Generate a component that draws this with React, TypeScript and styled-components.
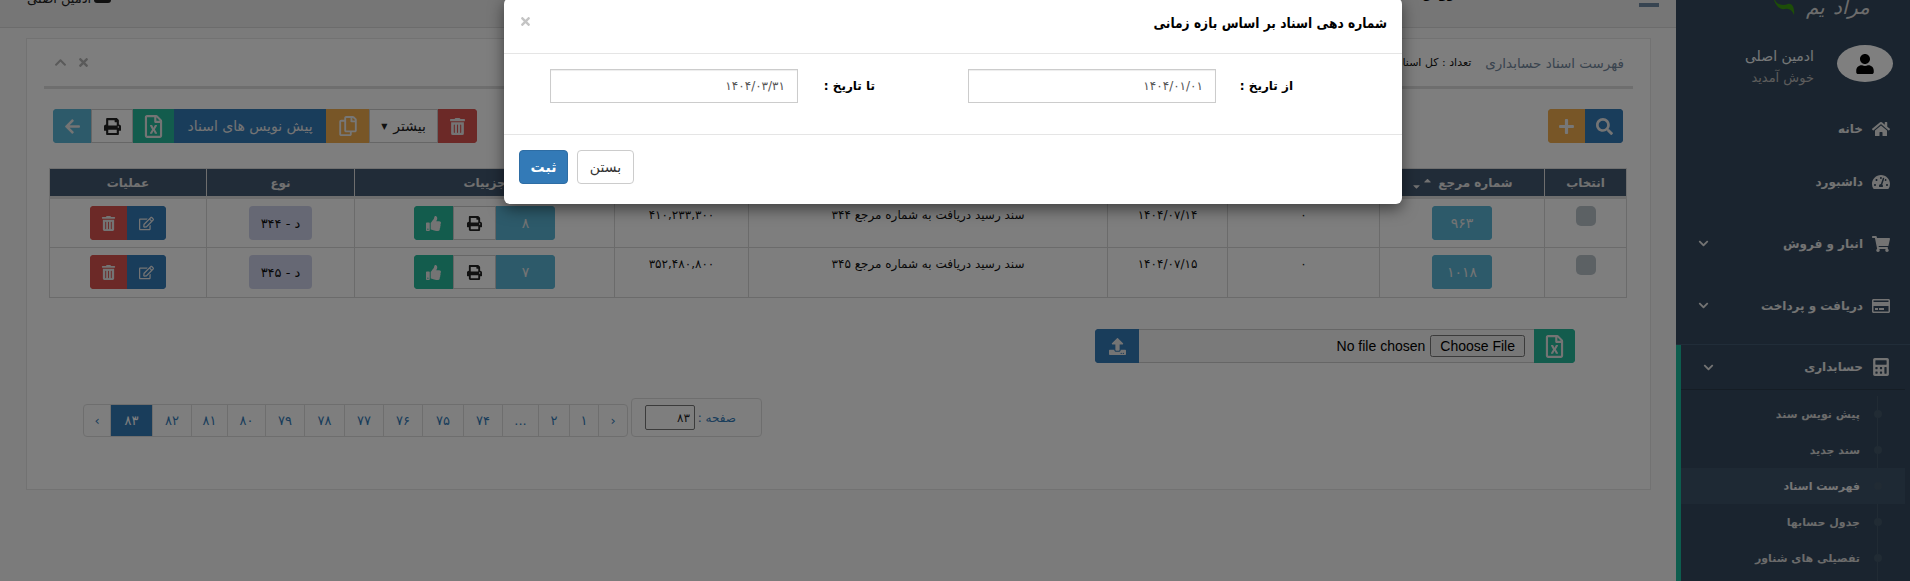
import { createGlobalStyle, styled } from "styled-components"
import {
  FaArrowLeft,
  FaCalculator,
  FaCaretDown,
  FaCaretUp,
  FaChevronDown,
  FaChevronUp,
  FaHome,
  FaPlus,
  FaPrint,
  FaRegCopy,
  FaRegCreditCard,
  FaRegEdit,
  FaRegFileExcel,
  FaSearch,
  FaShoppingCart,
  FaTachometerAlt,
  FaThumbsUp,
  FaTimes,
  FaTrashAlt,
  FaUpload,
  FaUser,
} from "react-icons/fa"

const FONT = `Tahoma, "DejaVu Sans", "Noto Sans", sans-serif`

const GlobalStyle = createGlobalStyle`
  html, body {
    margin: 0;
    height: 581px;
    overflow: hidden;
    background: #f6f6f6;
    font-family: ${FONT};
    font-size: 12px;
  }
  * { box-sizing: border-box; }
`

const Shell = styled.div`
  position: relative;
  display: flex;
  width: 1910px;
  height: 581px;
  overflow: hidden;
`

const Main = styled.main`
  flex: 0 0 1675px;
  display: flex;
  flex-direction: column;
`

const TopBar = styled.header`
  flex: 0 0 28px;
  display: flex;
  align-items: flex-end;
  justify-content: space-between;
  overflow: hidden;
  padding: 0 17px 21px 27px;
  background: #ececec;
  border-bottom: 1px solid #d8d8d8;
`

const TopUser = styled.div`
  display: flex;
  align-items: center;
  gap: 30px;
  font-size: 13px;
  color: #222;
`

const TopAvatar = styled.span`
  display: inline-block;
  width: 17px;
  height: 10px;
  margin-left: 3px;
  border-radius: 3px;
  background: #222;
`

const TopLine = styled.span`
  display: inline-block;
  width: 16px;
  height: 2px;
  background: #333;
`

const TopRight = styled.div`
  display: flex;
  align-items: flex-end;
  gap: 30px;
  font-size: 13px;
  font-weight: bold;
  color: #000;
`

const TopText = styled.span`
  margin-bottom: 5px;
`

const Hamburger = styled.span`
  display: inline-block;
  width: 20px;
  height: 4px;
  margin: 0 0 -1px 62px;
  background: #6f88a3;
`

const Panel = styled.section`
  margin: 10px 25px 0 26px;
  height: 452px;
  padding: 0 17px;
  background: #fdfdfd;
  border: 1px solid #e4e4e4;
`

const PanelHeader = styled.div`
  display: flex;
  align-items: center;
  justify-content: space-between;
  height: 50px;
  padding: 0 9px 0 10px;
  border-bottom: 3px solid #dcdcdc;
`

const PanelTitle = styled.div`
  display: flex;
  align-items: center;
  gap: 14px;
  direction: rtl;
  font-size: 13.5px;
  color: #73879c;
`

const PanelCount = styled.span`
  font-size: 11px;
  color: #111;
`

const PanelTools = styled.div`
  display: flex;
  gap: 10px;
  font-size: 13px;
  color: #b4b4b4;
`

const Toolbar = styled.div`
  display: flex;
  justify-content: space-between;
  margin: 20px 10px 0 9px;
`

const Group = styled.div`
  display: flex;
  overflow: hidden;
  border-radius: 4px;
`

const colours: Record<string, { bg: string; fg: string; line?: string }> = {
  info: { bg: "#5bb5d5", fg: "#e8e8e8" },
  blue: { bg: "#337ab7", fg: "#e8e8e8" },
  green: { bg: "#26b99a", fg: "#e8e8e8" },
  orange: { bg: "#f0ad4e", fg: "#eee" },
  red: { bg: "#d9534f", fg: "#e8e8e8" },
  white: { bg: "#fff", fg: "#222", line: "#ccc" },
}

const Btn = styled.button<{ $kind: string; $w: number }>`
  display: flex;
  align-items: center;
  justify-content: center;
  gap: 6px;
  width: ${(p) => p.$w}px;
  height: 34px;
  padding: 0;
  direction: rtl;
  font-family: ${FONT};
  font-size: 14px;
  color: ${(p) => colours[p.$kind].fg};
  background: ${(p) => colours[p.$kind].bg};
  border: 1px solid ${(p) => colours[p.$kind].line || colours[p.$kind].bg};
  svg {
    font-size: 17px;
  }
`

const ExcelIcon = styled(FaRegFileExcel)`
  && {
    font-size: 23px;
  }
`

const CopyIcon = styled(FaRegCopy)`
  && {
    font-size: 20px;
  }
`

const Caret = styled.span`
  font-size: 8px;
`

const Table = styled.table`
  width: 1577px;
  margin: 25px 6px 0 5px;
  border-collapse: collapse;
  table-layout: fixed;
  direction: rtl;
  font-size: 12px;
  color: #111;
  th {
    height: 29px;
    padding: 0;
    font-size: 12px;
    font-weight: bold;
    color: #e2e2e2;
    background: #435870;
    border: 1px solid #dddddd;
    border-bottom: 3px solid #dddddd;
  }
  td {
    height: 50px;
    padding: 7px 0 0;
    text-align: center;
    vertical-align: top;
    border: 1px solid #d6d6d6;
  }
`

const SortArrows = styled.span`
  display: inline-flex;
  margin-right: 5px;
  font-size: 11px;
  vertical-align: middle;
  svg:first-child {
    transform: translateY(-3px);
  }
  svg:last-child {
    transform: translateY(3px);
  }
`

const CellText = styled.div`
  margin-top: 2px;
`

const Check = styled.span`
  display: block;
  width: 20px;
  height: 20px;
  margin: 0 auto;
  border-radius: 5px;
  background: #b8c2c8;
`

const CellGroup = styled(Group)`
  display: inline-flex;
  svg {
    font-size: 15px;
  }
`

const Badge = styled.span`
  display: inline-flex;
  align-items: center;
  justify-content: center;
  height: 34px;
  padding: 0 12px;
  direction: rtl;
  font-size: 13px;
  color: #111;
  border-radius: 4px;
  background: #cdd1e8;
`

const UploadRow = styled.div`
  display: flex;
  direction: rtl;
  margin: 31px 58px 0 0;
`

const UploadBox = styled.div`
  display: flex;
  align-items: center;
  width: 395px;
  height: 34px;
  padding: 0 9px 0 6px;
  background: #f4f4f4;
  border-top: 1px solid #ccc;
  border-bottom: 1px solid #ccc;
  input {
    width: 100%;
    font-family: "Liberation Sans", sans-serif;
    font-size: 14px;
  }
  input::file-selector-button {
    padding: 1px 8px;
    margin-left: 5px;
  }
`

const PagerRow = styled.div`
  display: flex;
  direction: rtl;
  align-items: flex-end;
  justify-content: flex-end;
  gap: 3px;
  margin: 35px 0 0;
  padding-left: 39px;
`

const PageBox = styled.div`
  display: flex;
  align-items: center;
  justify-content: space-between;
  width: 131px;
  height: 39px;
  padding: 0 25px 0 13px;
  color: #337ab7;
  border: 1px solid #ddd;
  border-radius: 4px;
`

const PageInput = styled.input`
  width: 50px;
  height: 25px;
  padding: 0 4px;
  font-family: ${FONT};
  font-size: 12px;
  text-align: right;
  color: #222;
  background: transparent;
  border: 1px solid #777;
  border-radius: 2px;
`

const Pager = styled.div`
  display: flex;
  height: 33px;
  overflow: hidden;
  border: 1px solid #ddd;
  border-radius: 4px;
`

const PageItem = styled.span<{ $w: number; $on?: boolean }>`
  display: flex;
  align-items: center;
  justify-content: center;
  width: ${(p) => p.$w}px;
  font-size: 13px;
  color: ${(p) => (p.$on ? "#fff" : "#337ab7")};
  background: ${(p) => (p.$on ? "#337ab7" : "transparent")};
  border-left: 1px solid #ddd;
  &:last-child {
    border-left: 0;
  }
`

const Sidebar = styled.aside`
  flex: 1;
  display: flex;
  flex-direction: column;
  direction: rtl;
  color: #e7e7e7;
  background: #34495e;
`

const Logo = styled.div`
  display: flex;
  align-items: flex-start;
  height: 28px;
  padding-right: 40px;
  gap: 8px;
  overflow: hidden;
`

const LogoWord = styled.span`
  margin-top: -7px;
  font-size: 20px;
  font-style: italic;
  line-height: 28px;
  color: #d8d8d8;
`

const UserBlock = styled.div`
  display: flex;
  align-items: flex-start;
  gap: 23px;
  height: 74px;
  padding: 17px 17px 0 0;
`

const UserAvatar = styled.div`
  display: flex;
  align-items: center;
  justify-content: center;
  width: 56px;
  height: 37px;
  font-size: 20px;
  color: #000;
  border-radius: 50%;
  background: #fff;
`

const UserName = styled.div`
  margin-top: -1px;
  font-size: 14px;
  line-height: 24px;
  color: #ecf0f1;
`

const Welcome = styled.div`
  font-size: 13px;
  line-height: 20px;
  color: #bab8b8;
`

const NavItem = styled.div<{ $h: number; $gapAfter?: number }>`
  display: flex;
  align-items: center;
  gap: 9px;
  height: ${(p) => p.$h}px;
  margin-bottom: ${(p) => p.$gapAfter || 0}px;
  padding: 0 20px 0 22px;
  font-size: 12px;
  font-weight: bold;
  color: #e7e7e7;
  > svg {
    font-size: 18px;
  }
`

const SectionHead = styled(NavItem)`
  margin-right: 5px;
  padding-right: 15px;
  border-bottom: 1px solid #2a3a4a;
`

const Chevron = styled.span`
  display: flex;
  margin-right: auto;
  font-size: 11px;
`

const Active = styled.div`
  flex: 1;
  padding-left: 5px;
  border-top: 1px solid #425a72;
  box-shadow: inset 5px 0 0 #1abb9c;
`

const SubList = styled.div`
  position: relative;
  margin-right: 5px;
  padding-top: 6px;
  &::before {
    content: "";
    position: absolute;
    top: 6px;
    bottom: -40px;
    right: 27px;
    width: 1px;
    background: #425668;
  }
`

const SubItem = styled.div<{ $on?: boolean }>`
  position: relative;
  display: flex;
  align-items: center;
  height: 36px;
  padding-right: 45px;
  font-size: 11px;
  font-weight: bold;
  color: ${(p) => (p.$on ? "#ededed" : "#d6d6d6")};
  background: ${(p) => (p.$on ? "#3d5269" : "transparent")};
  &::before {
    content: "";
    position: absolute;
    right: 23px;
    top: 14px;
    width: 8px;
    height: 8px;
    border-radius: 50%;
    background: #425668;
  }
`

const Overlay = styled.div`
  position: absolute;
  inset: 0;
  background: rgba(0, 0, 0, 0.5);
`

const Modal = styled.div`
  position: absolute;
  top: -2px;
  left: 504px;
  width: 898px;
  height: 206px;
  direction: rtl;
  color: #000;
  background: #fff;
  border-radius: 6px;
  box-shadow: 0 5px 15px rgba(0, 0, 0, 0.5);
`

const ModalHeader = styled.div`
  display: flex;
  align-items: center;
  justify-content: space-between;
  height: 56px;
  padding: 0 15px 6px 15px;
  border-bottom: 1px solid #e5e5e5;
`

const ModalTitle = styled.h4`
  margin: 0;
  font-size: 14px;
  font-weight: bold;
  transform: scaleX(0.875);
  transform-origin: right center;
`

const Close = styled.span`
  font-size: 13px;
  color: #c4c4c4;
`

const ModalBody = styled.div`
  display: flex;
  align-items: center;
  height: 80px;
  padding: 0 109px 16px 0;
  gap: 93px;
`

const Field = styled.label`
  display: flex;
  align-items: center;
  font-size: 12px;
  font-weight: bold;
`

const FieldName = styled.span`
  width: 77px;
`

const DateInput = styled.input`
  width: 248px;
  height: 34px;
  padding: 0 12px;
  font-family: ${FONT};
  font-size: 12px;
  color: #555;
  border: 1px solid #ccc;
  box-shadow: inset 0 1px 1px rgba(0, 0, 0, 0.075);
`

const ModalFooter = styled.div`
  display: flex;
  justify-content: flex-end;
  gap: 9px;
  padding: 15px;
  border-top: 1px solid #e5e5e5;
`

const FooterBtn = styled.button<{ $primary?: boolean }>`
  height: 34px;
  width: ${(p) => (p.$primary ? 49 : 57)}px;
  padding: 0;
  font-family: ${FONT};
  font-size: 14px;
  font-weight: ${(p) => (p.$primary ? "bold" : "normal")};
  color: ${(p) => (p.$primary ? "#fff" : "#333")};
  background: ${(p) => (p.$primary ? "#337ab7" : "#fff")};
  border: 1px solid ${(p) => (p.$primary ? "#2e6da4" : "#ccc")};
  border-radius: 4px;
`

const rows = [
  { ref: "۹۶۳", date: "۱۴۰۴/۰۷/۱۴", text: "سند رسید دریافت به شماره مرجع ۳۴۴", amount: "۴۱۰,۲۳۳,۳۰۰", n: "۸", type: "د - ۳۴۴" },
  { ref: "۱۰۱۸", date: "۱۴۰۴/۰۷/۱۵", text: "سند رسید دریافت به شماره مرجع ۳۴۵", amount: "۳۵۲,۴۸۰,۸۰۰", n: "۷", type: "د - ۳۴۵" },
]

const pages = [
  { t: "‹", w: 29 }, { t: "۱", w: 29 }, { t: "۲", w: 31 }, { t: "...", w: 36 }, { t: "۷۴", w: 39 },
  { t: "۷۵", w: 41 }, { t: "۷۶", w: 39 }, { t: "۷۷", w: 39 }, { t: "۷۸", w: 40 }, { t: "۷۹", w: 39 },
  { t: "۸۰", w: 38 }, { t: "۸۱", w: 36 }, { t: "۸۲", w: 39 }, { t: "۸۳", w: 42, on: true }, { t: "›", w: 26 },
]

const subItems = ["پیش نویس سند", "سند جدید", "فهرست اسناد", "جدول حسابها", "تفصیلی های شناور"]

export default function App() {
  return (
    <>
      <GlobalStyle />
      <Shell>
        <Main>
          <TopBar>
            <TopUser>
              <span>ادمین اصلی<TopAvatar /></span>
              <TopLine />
            </TopUser>
            <TopRight>
              <TopText>فروش</TopText>
              <TopText>●</TopText>
              <TopText>●</TopText>
              <Hamburger />
            </TopRight>
          </TopBar>
          <Panel>
            <PanelHeader>
              <PanelTools>
                <FaChevronUp />
                <FaTimes />
              </PanelTools>
              <PanelTitle>
                فهرست اسناد حسابداری
                <PanelCount>تعداد : کل اسناد</PanelCount>
              </PanelTitle>
            </PanelHeader>
            <Toolbar>
              <Group>
                <Btn $kind="info" $w={38}><FaArrowLeft /></Btn>
                <Btn $kind="white" $w={42}><FaPrint /></Btn>
                <Btn $kind="green" $w={41}><ExcelIcon /></Btn>
                <Btn $kind="blue" $w={152}>پیش نویس های اسناد</Btn>
                <Btn $kind="orange" $w={43}><CopyIcon /></Btn>
                <Btn $kind="white" $w={69}>بیشتر <Caret>▼</Caret></Btn>
                <Btn $kind="red" $w={39}><FaTrashAlt /></Btn>
              </Group>
              <Group>
                <Btn $kind="orange" $w={37}><FaPlus /></Btn>
                <Btn $kind="blue" $w={38}><FaSearch /></Btn>
              </Group>
            </Toolbar>
            <Table>
              <colgroup>
                <col width={82} />
                <col width={165} />
                <col width={152} />
                <col width={120} />
                <col width={359} />
                <col width={134} />
                <col width={260} />
                <col width={148} />
                <col width={157} />
              </colgroup>
              <thead>
                <tr>
                  <th>انتخاب</th>
                  <th>شماره مرجع<SortArrows><FaCaretUp /><FaCaretDown /></SortArrows></th>
                  <th>وضعیت</th>
                  <th>تاریخ</th>
                  <th>شرح</th>
                  <th>مبلغ</th>
                  <th>جزییات</th>
                  <th>نوع</th>
                  <th>عملیات</th>
                </tr>
              </thead>
              <tbody>
                {rows.map((row) => (
                  <tr key={row.ref}>
                    <td><Check /></td>
                    <td><CellGroup><Btn $kind="info" $w={60}>{row.ref}</Btn></CellGroup></td>
                    <td><CellText>۰</CellText></td>
                    <td><CellText>{row.date}</CellText></td>
                    <td><CellText>{row.text}</CellText></td>
                    <td><CellText>{row.amount}</CellText></td>
                    <td>
                      <CellGroup>
                        <Btn $kind="info" $w={59}>{row.n}</Btn>
                        <Btn $kind="white" $w={43}><FaPrint /></Btn>
                        <Btn $kind="green" $w={39}><FaThumbsUp /></Btn>
                      </CellGroup>
                    </td>
                    <td><Badge>{row.type}</Badge></td>
                    <td>
                      <CellGroup>
                        <Btn $kind="blue" $w={39}><FaRegEdit /></Btn>
                        <Btn $kind="red" $w={37}><FaTrashAlt /></Btn>
                      </CellGroup>
                    </td>
                  </tr>
                ))}
              </tbody>
            </Table>
            <UploadRow>
              <Group>
                <Btn $kind="green" $w={41}><ExcelIcon /></Btn>
                <UploadBox><input type="file" /></UploadBox>
                <Btn $kind="blue" $w={44}><FaUpload /></Btn>
              </Group>
            </UploadRow>
            <PagerRow>
              <PageBox>
                صفحه :
                <PageInput defaultValue="۸۳" />
              </PageBox>
              <Pager>
                {pages.map((p) => (
                  <PageItem key={p.t} $w={p.w} $on={p.on}>{p.t}</PageItem>
                ))}
              </Pager>
            </PagerRow>
          </Panel>
        </Main>
        <Sidebar>
          <Logo>
            <LogoWord>مراد</LogoWord>
            <LogoWord>یم</LogoWord>
            <svg width="24" height="16" viewBox="0 0 24 16">
              <path d="M1 0C3 5 9 6 14 4 18 3 21 8 20 15 18 10 15 8 11 9 6 10 2 6 0 0z" fill="#3a9a10" />
            </svg>
          </Logo>
          <UserBlock>
            <UserAvatar><FaUser /></UserAvatar>
            <div>
              <UserName>ادمین اصلی</UserName>
              <Welcome>خوش آمدید</Welcome>
            </div>
          </UserBlock>
          <NavItem $h={53}><FaHome />خانه</NavItem>
          <NavItem $h={53}><FaTachometerAlt />داشبورد</NavItem>
          <NavItem $h={71}><FaShoppingCart />انبار و فروش<Chevron><FaChevronDown /></Chevron></NavItem>
          <NavItem $h={53} $gapAfter={12}><FaRegCreditCard />دریافت و پرداخت<Chevron><FaChevronDown /></Chevron></NavItem>
          <Active>
            <SectionHead $h={45}><FaCalculator />حسابداری<Chevron><FaChevronDown /></Chevron></SectionHead>
            <SubList>
              {subItems.map((item) => (
                <SubItem key={item} $on={item === "فهرست اسناد"}>{item}</SubItem>
              ))}
            </SubList>
          </Active>
        </Sidebar>
        <Overlay />
        <Modal>
          <ModalHeader>
            <ModalTitle>شماره دهی اسناد بر اساس بازه زمانی</ModalTitle>
            <Close><FaTimes /></Close>
          </ModalHeader>
          <ModalBody>
            <Field>
              <FieldName>از تاریخ :</FieldName>
              <DateInput defaultValue="۱۴۰۴/۰۱/۰۱" />
            </Field>
            <Field>
              <FieldName>تا تاریخ :</FieldName>
              <DateInput defaultValue="۱۴۰۴/۰۳/۳۱" />
            </Field>
          </ModalBody>
          <ModalFooter>
            <FooterBtn>بستن</FooterBtn>
            <FooterBtn $primary>ثبت</FooterBtn>
          </ModalFooter>
        </Modal>
      </Shell>
    </>
  )
}
